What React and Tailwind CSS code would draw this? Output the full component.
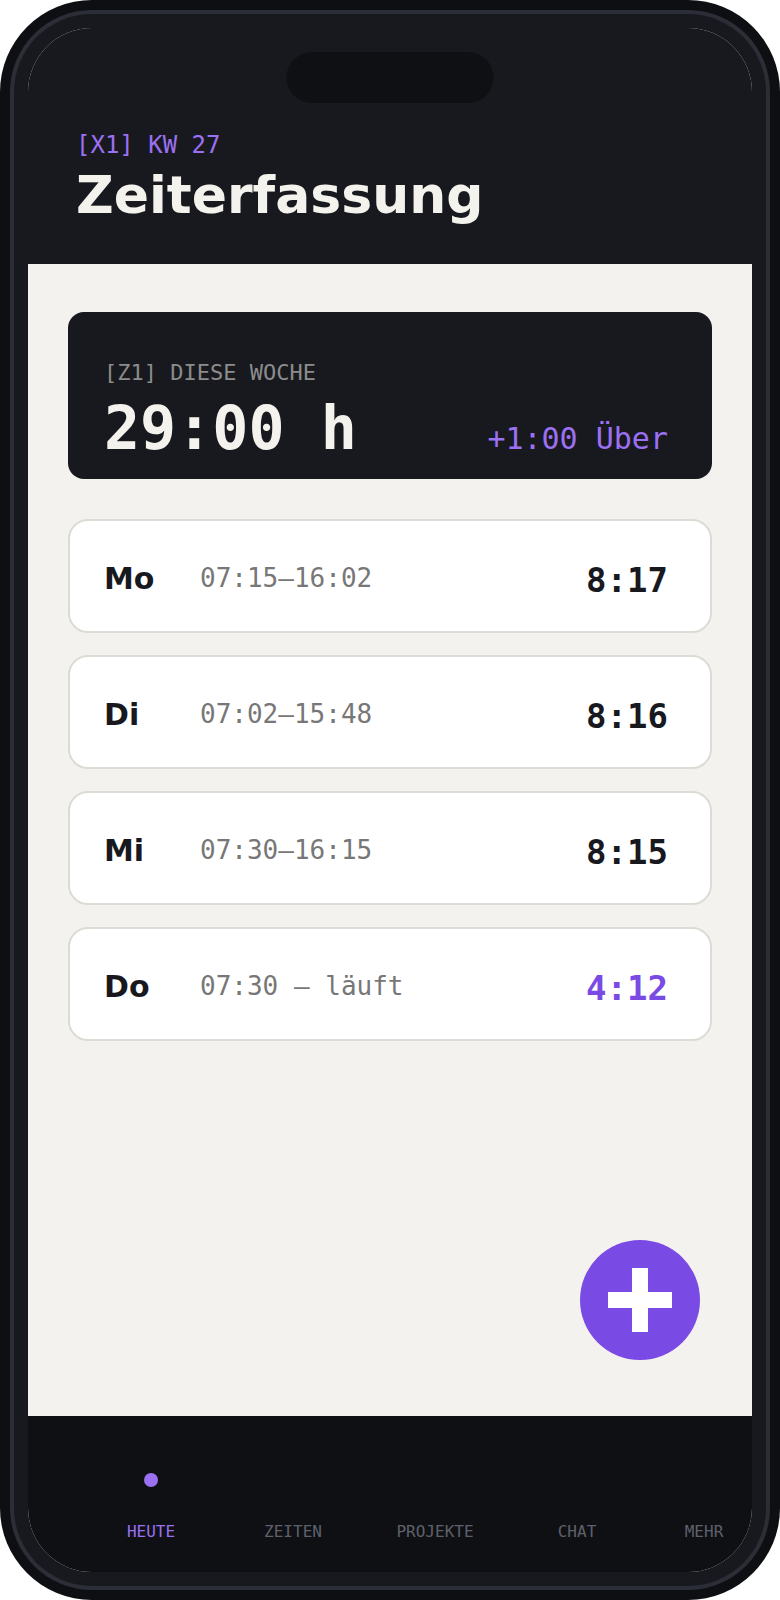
import React from "react";

const mono = "font-['DejaVu_Sans_Mono',monospace]";
const sans = "font-['DejaVu_Sans',sans-serif]";

const days = [
  { d: "Mo", t: "07:15–16:02", h: "8:17", live: false },
  { d: "Di", t: "07:02–15:48", h: "8:16", live: false },
  { d: "Mi", t: "07:30–16:15", h: "8:15", live: false },
  { d: "Do", t: "07:30 – läuft", h: "4:12", live: true },
];

const nav = ["HEUTE", "ZEITEN", "PROJEKTE", "CHAT", "MEHR"];

export default function App() {
  return (
    <div className="w-[780px] h-[1600px] bg-white">
      <div className="w-full h-full rounded-[92px] bg-[#0e0f12] p-[10px]">
        <div className="w-full h-full rounded-[82px] bg-[#2b2e37] p-[4px]">
          <div className="w-full h-full rounded-[78px] bg-[#18191e] p-[14px]">
            <div className="relative w-full h-full rounded-[64px] overflow-hidden flex flex-col bg-[#f3f2ee]">
              {/* header */}
              <div className="relative h-[236px] shrink-0 bg-[#18191e] pl-[48px] pt-[103px]">
                <div className="absolute top-[24px] left-1/2 -translate-x-1/2 w-[207px] h-[51px] rounded-full bg-[#0f1013]" />
                <div className={`${mono} text-[24px] leading-[28px] text-[#9b70f2]`}>[X1] KW 27</div>
                <div className={`${sans} mt-[10px] text-[52px] leading-[52px] font-bold text-[#f3f2ec]`}>
                  Zeiterfassung
                </div>
              </div>

              {/* main */}
              <div className="relative flex-1 px-[40px] pt-[48px]">
                <div className="h-[167px] rounded-[16px] bg-[#18191e] pl-[36px] pr-[44px] pt-[48px]">
                  <div className={`${mono} text-[22px] leading-[25px] text-[#8c8c8c]`}>[Z1] DIESE WOCHE</div>
                  <div className="mt-[13px] flex items-baseline justify-between">
                    <div className={`${mono} text-[60px] leading-[60px] font-bold text-[#f3f2ec]`}>29:00 h</div>
                    <div className={`${mono} text-[30px] leading-[30px] text-[#9b70f2]`}>+1:00 Über</div>
                  </div>
                </div>

                <div className="mt-[40px] flex flex-col gap-[22px]">
                  {days.map((r) => (
                    <div
                      key={r.d}
                      className="h-[114px] rounded-[20px] border-2 border-[#dcdbd6] bg-white flex items-center pl-[34px] pr-[42px] pt-[4px]"
                    >
                      <div className={`${sans} w-[96px] text-[30px] font-bold text-[#18191e]`}>{r.d}</div>
                      <div className={`${mono} flex-1 text-[26px] text-[#777777]`}>{r.t}</div>
                      <div
                        className={`${mono} mt-[4px] text-[34px] font-bold ${r.live ? "text-[#7a4ae4]" : "text-[#18191e]"}`}
                      >
                        {r.h}
                      </div>
                    </div>
                  ))}
                </div>

                <div className="absolute right-[52px] bottom-[56px] w-[120px] h-[120px] rounded-full bg-[#7a4ae4] flex items-center justify-center">
                  <div className="relative w-[64px] h-[64px]">
                    <div className="absolute left-0 top-[24px] w-[64px] h-[16px] bg-white" />
                    <div className="absolute left-[24px] top-0 w-[16px] h-[64px] bg-white" />
                  </div>
                </div>
              </div>

              {/* nav */}
              <div className="h-[156px] shrink-0 bg-[#0f1013] pl-[52px] grid grid-cols-[142px_142px_142px_142px_112px]">
                {nav.map((n, i) => (
                  <div key={n} className="flex flex-col items-center pt-[57px]">
                    <div className={`w-[14px] h-[14px] rounded-full ${i === 0 ? "bg-[#9b70f2]" : "bg-transparent"}`} />
                    <div
                      className={`${mono} mt-[33px] text-[16px] ${i === 0 ? "text-[#9b70f2]" : "text-[#5e616c]"}`}
                    >
                      {n}
                    </div>
                  </div>
                ))}
              </div>
            </div>
          </div>
        </div>
      </div>
    </div>
  );
}
